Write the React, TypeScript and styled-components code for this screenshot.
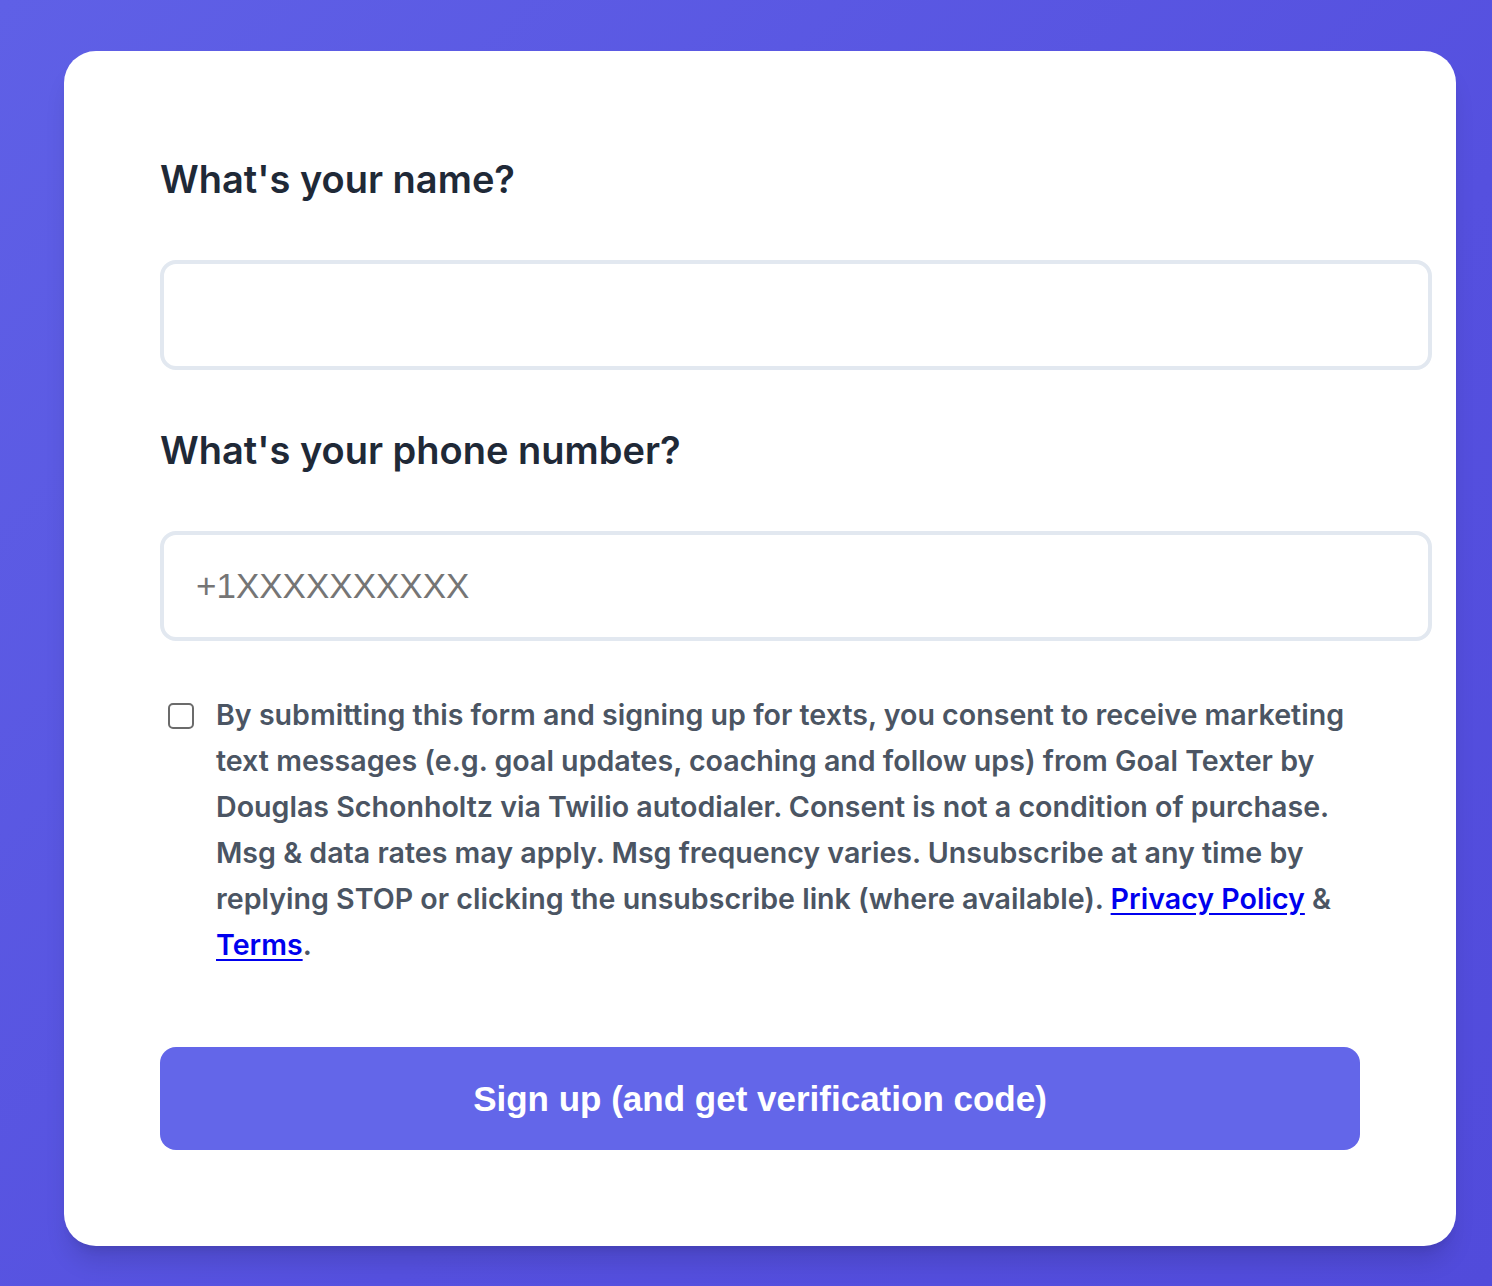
import styled, { createGlobalStyle } from 'styled-components';

const GlobalStyle = createGlobalStyle`
  html, body {
    margin: 0;
    padding: 0;
  }
  body {
    min-height: 1286px;
    background: linear-gradient(135deg, #5f60e6 0%, #5550df 60%, #514bdb 100%);
    font-family: Inter, "Noto Sans", sans-serif;
  }
  * {
    box-sizing: border-box;
  }
`;

const Page = styled.div`
  padding: 51px 36px 40px 64px;
`;

const Card = styled.form`
  background: #ffffff;
  border-radius: 32px;
  padding: 96px;
  box-shadow: 0 20px 25px -5px rgba(0, 0, 0, 0.12), 0 8px 10px -6px rgba(0, 0, 0, 0.1);
`;

const Field = styled.div<{ $gap?: number }>`
  display: flex;
  flex-direction: column;
  margin-bottom: ${(p) => p.$gap ?? 48}px;
`;

const Label = styled.label`
  font-family: Inter, sans-serif;
  font-size: 38px;
  font-weight: 600;
  line-height: 54px;
  color: #1f2937;
  margin: 5px 0 54px;
`;

const Input = styled.input`
  box-sizing: content-box;
  width: 100%;
  height: 40px;
  padding: 31px 32px;
  border: 4px solid #e2e8f0;
  border-radius: 16px;
  background: #ffffff;
  font-family: "Liberation Sans", Arial, sans-serif;
  font-size: 35px;
  color: #1f2937;
  outline: none;

  &::placeholder {
    color: #757575;
  }
`;

const Consent = styled.label`
  display: flex;
  align-items: flex-start;
  margin-bottom: 79px;
`;

const Check = styled.input`
  flex: none;
  appearance: none;
  width: 26px;
  height: 26px;
  margin: 11px 22px 0 8px;
  border: 2px solid #6b6b6b;
  border-radius: 5px;
  background: #ffffff;
`;

const ConsentText = styled.p`
  margin: 0;
  font-family: Inter, sans-serif;
  font-size: 28.6px;
  font-weight: 600;
  line-height: 46px;
  color: #4b5563;

  a {
    color: #0000ee;
    text-decoration: underline;
    text-underline-offset: 4px;
  }
`;

const SubmitButton = styled.button`
  width: 100%;
  height: 103px;
  border: none;
  border-radius: 16px;
  background: #6366e9;
  color: #ffffff;
  font-family: "Liberation Sans", Arial, sans-serif;
  font-size: 35px;
  font-weight: 700;
  cursor: pointer;
`;

export default function App() {
  return (
    <>
      <GlobalStyle />
      <Page>
        <Card onSubmit={(e) => e.preventDefault()}>
          <Field>
            <Label htmlFor="name">What's your name?</Label>
            <Input id="name" type="text" />
          </Field>
          <Field $gap={51}>
            <Label htmlFor="phone">What's your phone number?</Label>
            <Input id="phone" type="tel" placeholder="+1XXXXXXXXXX" />
          </Field>
          <Consent>
            <Check type="checkbox" />
            <ConsentText>
              By submitting this form and signing up for texts, you consent to receive marketing
              text messages (e.g. goal updates, coaching and follow ups) from Goal Texter by
              Douglas Schonholtz via Twilio autodialer. Consent is not a condition of purchase.
              Msg &amp; data rates may apply. Msg frequency varies. Unsubscribe at any time by
              replying STOP or clicking the unsubscribe link (where available).{' '}
              <a href="#">Privacy Policy</a> &amp; <a href="#">Terms</a>.
            </ConsentText>
          </Consent>
          <SubmitButton type="submit">Sign up (and get verification code)</SubmitButton>
        </Card>
      </Page>
    </>
  );
}
